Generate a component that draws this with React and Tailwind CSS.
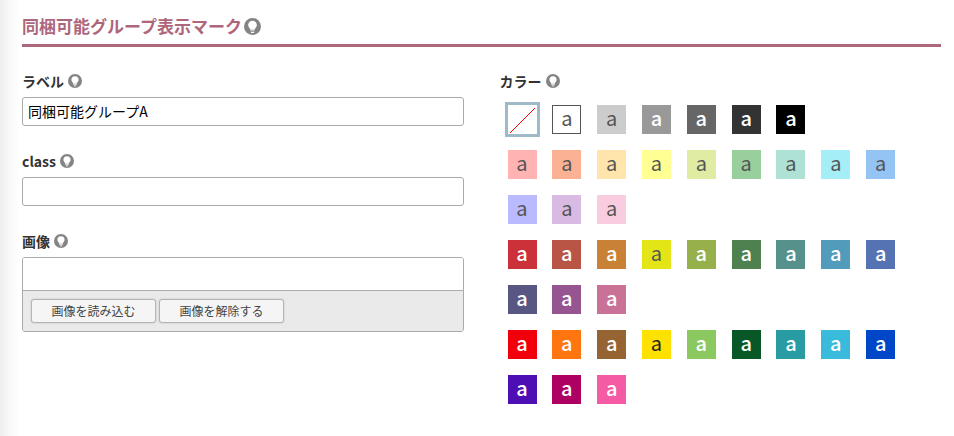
import React, { useState } from 'react';

const swatchRows = [
  [
    { value: 'none', bg: 'bg-white' },
    { value: 'white', bg: 'bg-white border border-[#555]', text: 'text-[#555]' },
    { value: 'gray-1', bg: 'bg-[#ccc]', text: 'text-[#555]' },
    { value: 'gray-2', bg: 'bg-[#999]', text: 'text-white font-medium' },
    { value: 'gray-3', bg: 'bg-[#666]', text: 'text-white font-medium' },
    { value: 'gray-4', bg: 'bg-[#333]', text: 'text-white font-medium' },
    { value: 'black', bg: 'bg-black', text: 'text-white font-medium' },
  ],
  [
    { value: 'pale-1', bg: 'bg-[#ffb3b3]', text: 'text-[#555]' },
    { value: 'pale-2', bg: 'bg-[#fbb194]', text: 'text-[#555]' },
    { value: 'pale-3', bg: 'bg-[#ffe5ab]', text: 'text-[#555]' },
    { value: 'pale-4', bg: 'bg-[#ffff94]', text: 'text-[#555]' },
    { value: 'pale-5', bg: 'bg-[#e0eba3]', text: 'text-[#555]' },
    { value: 'pale-6', bg: 'bg-[#99cf9d]', text: 'text-[#555]' },
    { value: 'pale-7', bg: 'bg-[#aee2d6]', text: 'text-[#555]' },
    { value: 'pale-8', bg: 'bg-[#a5edf7]', text: 'text-[#555]' },
    { value: 'pale-9', bg: 'bg-[#93c4f4]', text: 'text-[#555]' },
    { value: 'pale-10', bg: 'bg-[#b9baff]', text: 'text-[#555]' },
    { value: 'pale-11', bg: 'bg-[#d8bae3]', text: 'text-[#555]' },
    { value: 'pale-12', bg: 'bg-[#f9cddf]', text: 'text-[#555]' },
  ],
  [
    { value: 'deep-1', bg: 'bg-[#ca3138]', text: 'text-white font-medium' },
    { value: 'deep-2', bg: 'bg-[#b85545]', text: 'text-white font-medium' },
    { value: 'deep-3', bg: 'bg-[#c88135]', text: 'text-white font-medium' },
    { value: 'deep-4', bg: 'bg-[#e3e517]', text: 'text-[#555]' },
    { value: 'deep-5', bg: 'bg-[#96b04b]', text: 'text-white font-medium' },
    { value: 'deep-6', bg: 'bg-[#4e8050]', text: 'text-white font-medium' },
    { value: 'deep-7', bg: 'bg-[#56928b]', text: 'text-white font-medium' },
    { value: 'deep-8', bg: 'bg-[#529bba]', text: 'text-white font-medium' },
    { value: 'deep-9', bg: 'bg-[#5572b2]', text: 'text-white font-medium' },
    { value: 'deep-10', bg: 'bg-[#585683]', text: 'text-white font-medium' },
    { value: 'deep-11', bg: 'bg-[#965490]', text: 'text-white font-medium' },
    { value: 'deep-12', bg: 'bg-[#c97197]', text: 'text-white font-medium' },
  ],
  [
    { value: 'vivid-1', bg: 'bg-[#f1000b]', text: 'text-white font-medium' },
    { value: 'vivid-2', bg: 'bg-[#ff750f]', text: 'text-white font-medium' },
    { value: 'vivid-3', bg: 'bg-[#966432]', text: 'text-white font-medium' },
    { value: 'vivid-4', bg: 'bg-[#ffe100]', text: 'text-[#222]' },
    { value: 'vivid-5', bg: 'bg-[#8bc85f]', text: 'text-white font-medium' },
    { value: 'vivid-6', bg: 'bg-[#085827]', text: 'text-white font-medium' },
    { value: 'vivid-7', bg: 'bg-[#289ca2]', text: 'text-white font-medium' },
    { value: 'vivid-8', bg: 'bg-[#3bbbdb]', text: 'text-white font-medium' },
    { value: 'vivid-9', bg: 'bg-[#0046c8]', text: 'text-white font-medium' },
    { value: 'vivid-10', bg: 'bg-[#4d0fb4]', text: 'text-white font-medium' },
    { value: 'vivid-11', bg: 'bg-[#ae0062]', text: 'text-white font-medium' },
    { value: 'vivid-12', bg: 'bg-[#f55aa4]', text: 'text-white font-medium' },
  ],
];

const HintIcon = ({ className }) => (
  <svg viewBox="0 0 18 18" className={className} aria-hidden="true">
    <circle cx="9" cy="9" r="9" fill="#848484" />
    <path
      d="M9 2.8a4.6 4.6 0 0 0-4.6 4.6c0 2.3 1.9 3 2.3 5.1h4.6c.4-2.1 2.3-2.8 2.3-5.1A4.6 4.6 0 0 0 9 2.8z"
      fill="#fff"
    />
    <path d="M6.8 13.2h4.4v.9H6.8zM7.1 14.7h3.8c-.3.9-.9 1.3-1.900 1.300s-1.600-.4-1.900-1.300z" fill="#fff" />
  </svg>
);

const Caption = ({ children }) => (
  <span className="flex items-center gap-1 h-5 text-sm leading-5 font-bold text-[#333]">
    {children}
    <HintIcon className="w-3.5 h-3.5" />
  </span>
);

const inputClass =
  'block w-full h-[29px] mt-1.5 px-[5px] pb-0.5 text-sm text-black bg-white border border-[#aaa] rounded-[3px]';

const buttonClass =
  'w-[125px] h-6 text-xs text-[#444] bg-[#f5f5f5] border border-[#b4b4b4] rounded-[3px] shadow-[0_0_2px_rgba(0,0,0,0.2)]';

const Swatch = ({ swatch, checked, onChange }) => (
  <label className="block w-[29px] h-[29px] cursor-pointer">
    <input
      type="radio"
      name="color"
      value={swatch.value}
      checked={checked}
      onChange={onChange}
      aria-label={swatch.value}
      className="peer sr-only"
    />
    <span
      className={`flex items-center justify-center w-full h-full text-xl leading-none peer-checked:outline-3 peer-checked:outline-[#9fb9c8] ${swatch.bg} ${swatch.text || ''}`}
    >
      {swatch.value === 'none' ? (
        <svg viewBox="0 0 29 29" className="w-full h-full" shapeRendering="crispEdges">
          <path d="M2 28L27 3" stroke="#f00" strokeWidth="1" />
        </svg>
      ) : (
        <span className="pb-1">a</span>
      )}
    </span>
  </label>
);

const App = () => {
  const [label, setLabel] = useState('同梱可能グループA');
  const [className, setClassName] = useState('');
  const [color, setColor] = useState('none');

  return (
    <div
      lang="ja"
      className="min-h-screen pl-[22px] pr-[13px] pt-3.5 pb-8 bg-[linear-gradient(to_right,#eeeeee,#f9f9f9_10px,#ffffff_20px)] font-['Noto_Sans_CJK_JP',sans-serif]"
    >
      <h2 className="flex items-center gap-0.5 pb-1.5 h-[33px] border-b-3 border-[#ae667b] text-[17px] leading-6 font-bold text-[#ae667b]">
        同梱可能グループ表示マーク
        <HintIcon className="w-[17px] h-[17px]" />
      </h2>

      <div className="grid grid-cols-2 gap-9 mt-6">
        <div className="flex flex-col gap-[25px]">
          <label className="block">
            <Caption>ラベル</Caption>
            <input
              type="text"
              value={label}
              onChange={(e) => setLabel(e.target.value)}
              className={inputClass}
            />
          </label>
          <label className="block">
            <Caption>class</Caption>
            <input
              type="text"
              value={className}
              onChange={(e) => setClassName(e.target.value)}
              className={inputClass}
            />
          </label>
          <div>
            <Caption>画像</Caption>
            <div className="mt-1.5 border border-[#aaa] rounded-[3px] overflow-hidden">
              <div className="h-8 bg-white" />
              <div className="flex gap-[3px] p-2 bg-[#eaeaea] border-t border-[#aaa]">
                <button type="button" className={buttonClass}>
                  画像を読み込む
                </button>
                <button type="button" className={buttonClass}>
                  画像を解除する
                </button>
              </div>
            </div>
          </div>
        </div>

        <fieldset>
          <legend>
            <Caption>カラー</Caption>
          </legend>
          <div className="flex flex-col gap-4 mt-3.5 pl-2 pr-[30px]">
            {swatchRows.map((row, i) => (
              <div key={i} className="grid grid-cols-9 gap-y-4">
                {row.map((swatch) => (
                  <Swatch
                    key={swatch.value}
                    swatch={swatch}
                    checked={color === swatch.value}
                    onChange={() => setColor(swatch.value)}
                  />
                ))}
              </div>
            ))}
          </div>
        </fieldset>
      </div>
    </div>
  );
};

export default App;
